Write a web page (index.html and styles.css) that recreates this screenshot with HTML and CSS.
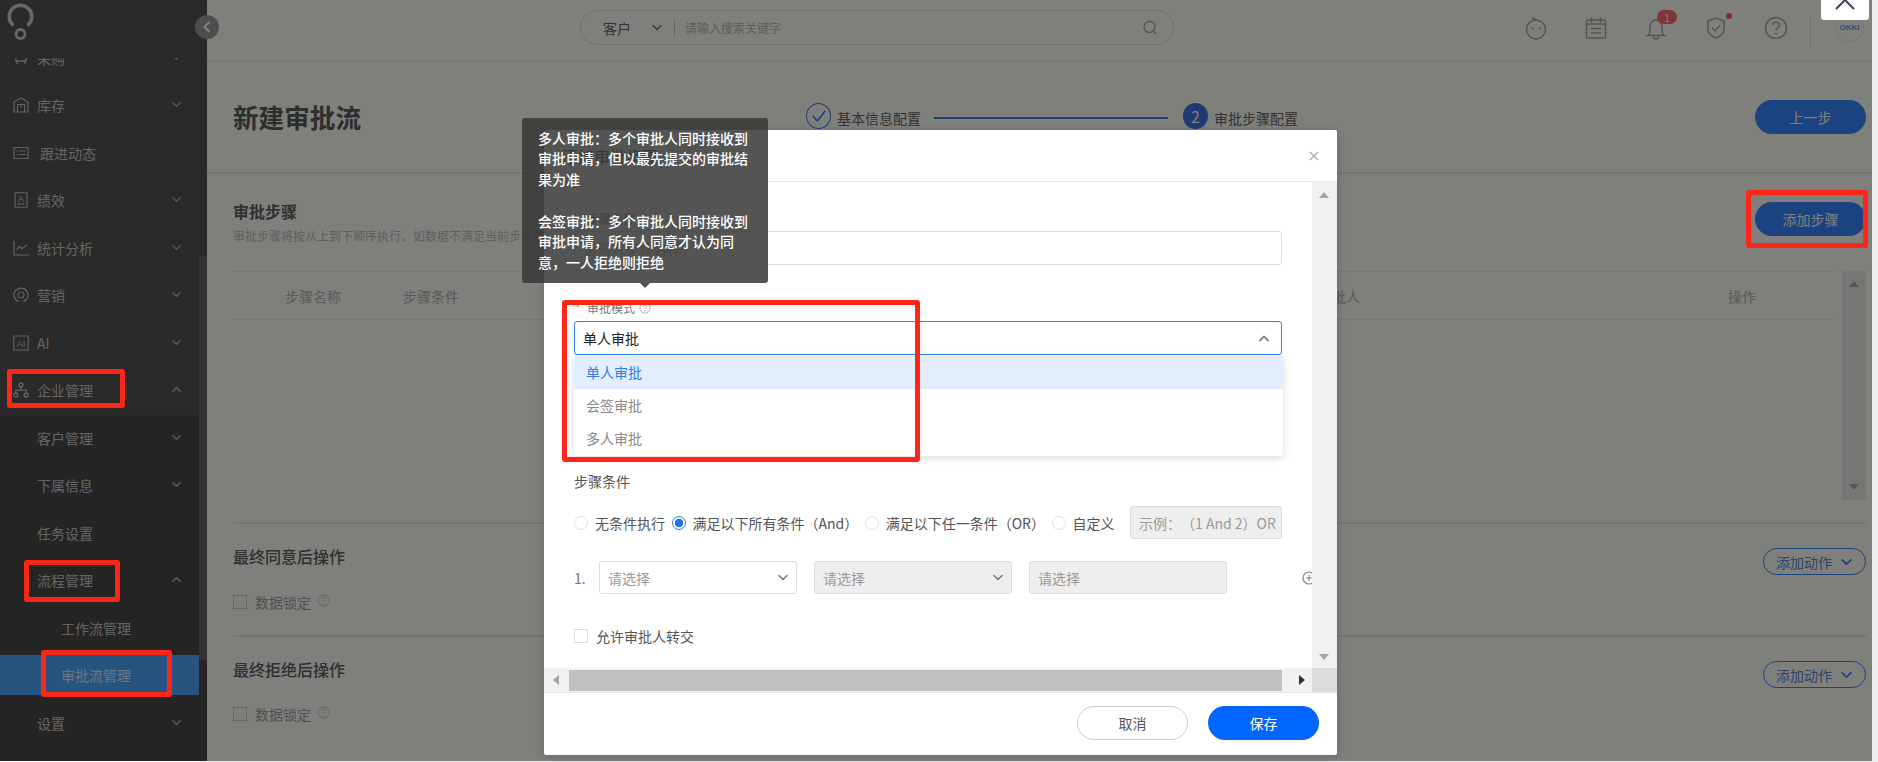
FILE: index.html
```html
<!DOCTYPE html>
<html lang="zh-CN">
<head>
<meta charset="utf-8">
<title>新建审批流</title>
<link rel="stylesheet" href="styles.css">
</head>
<body>
<svg class="sprite" width="0" height="0" aria-hidden="true">
  <symbol id="down" viewBox="0 0 10 6"><path d="M1 1l4 4 4-4" fill="none" stroke="currentColor" stroke-width="1.5" stroke-linecap="round" stroke-linejoin="round"/></symbol>
  <symbol id="up" viewBox="0 0 10 6"><path d="M1 5l4-4 4 4" fill="none" stroke="currentColor" stroke-width="1.8" stroke-linecap="round" stroke-linejoin="round"/></symbol>
  <symbol id="help" viewBox="0 0 14 14"><circle cx="7" cy="7" r="6" fill="none" stroke="currentColor"/><path d="M5.2 5.4c0-2.300 3.600-2.300 3.600 0 0 1.400-1.800 1.300-1.800 2.900" fill="none" stroke="currentColor"/><circle cx="7" cy="10.300" r=".7" fill="currentColor"/></symbol>
</svg>
<div class="app">
  <aside class="sidebar">
    <div class="logo">
      <svg width="32" height="42" viewBox="0 0 32 42"><path d="M7.500 24.500A11.300 11.300 0 1 1 23.500 24.500" fill="none" stroke="#cfcfcf" stroke-width="3.600" stroke-linecap="round"/><circle cx="15.500" cy="34" r="4.500" fill="none" stroke="#cfcfcf" stroke-width="2.800"/></svg>
    </div>
    <nav class="nav">
      <div class="nav-item"><svg class="nav-icon" viewBox="0 0 16 16"><path d="M2 2l1 9h10l1-9M4 11v3M12 11v3M5 6h6" fill="none" stroke="currentColor" stroke-width="1.300"/></svg><span class="nav-text">采购</span><svg class="chev"><use href="#down"/></svg></div>
      <div class="nav-item"><svg class="nav-icon" viewBox="0 0 16 16"><path d="M1 5l7-4 7 4v10H1zM4.500 15V7.500h7V15M8 7.500V11" fill="none" stroke="currentColor" stroke-width="1.100"/></svg><span class="nav-text">库存</span><svg class="chev"><use href="#down"/></svg></div>
      <div class="nav-item"><svg class="nav-icon" viewBox="0 0 16 16"><path d="M1 2.500h14v11H1zM6 6h6.500M6 9.500h6.500M3.300 6h1M3.300 9.500h1" fill="none" stroke="currentColor" stroke-width="1.100"/></svg><span class="nav-text nav-text-wide">跟进动态</span></div>
      <div class="nav-item"><svg class="nav-icon" viewBox="0 0 16 16"><path d="M2 .8h12v14.400H2zM4.500 12h7" fill="none" stroke="currentColor" stroke-width="1.100"/><text x="8" y="9.600" class="icon-letter">A</text></svg><span class="nav-text">绩效</span><svg class="chev"><use href="#down"/></svg></div>
      <div class="nav-item"><svg class="nav-icon" viewBox="0 0 16 16"><path d="M1 1v14h15M3.500 10l3-3.500 2.500 2L14 5" fill="none" stroke="currentColor" stroke-width="1.100"/></svg><span class="nav-text">统计分析</span><svg class="chev"><use href="#down"/></svg></div>
      <div class="nav-item"><svg class="nav-icon" viewBox="0 0 16 16"><path d="M5.500 14.600A7 7 0 1 1 10.500 14.600" fill="none" stroke="currentColor" stroke-width="1.200"/><circle cx="8" cy="8" r="3" fill="none" stroke="currentColor" stroke-width="1.200"/></svg><span class="nav-text">营销</span><svg class="chev"><use href="#down"/></svg></div>
      <div class="nav-item"><svg class="nav-icon" viewBox="0 0 16 16"><path d="M.8 1h14.400v14H.8z" fill="none" stroke="currentColor" stroke-width="1.100"/><text x="8" y="11.500" class="icon-letter">AI</text></svg><span class="nav-text">AI</span><svg class="chev"><use href="#down"/></svg></div>
      <div class="nav-item nav-open"><svg class="nav-icon" viewBox="0 0 16 16"><circle cx="8" cy="3" r="2" fill="none" stroke="currentColor" stroke-width="1.300"/><circle cx="2.800" cy="13" r="2" fill="none" stroke="currentColor" stroke-width="1.300"/><circle cx="13.200" cy="13" r="2" fill="none" stroke="currentColor" stroke-width="1.300"/><path d="M8 5v3.200M2.800 11V8.200h10.400V11" fill="none" stroke="currentColor" stroke-width="1.300"/></svg><span class="nav-text">企业管理</span><svg class="chev"><use href="#up"/></svg></div>
      <div class="nav-item nav-sub"><span class="nav-text">客户管理</span><svg class="chev"><use href="#down"/></svg></div>
      <div class="nav-item nav-sub"><span class="nav-text">下属信息</span><svg class="chev"><use href="#down"/></svg></div>
      <div class="nav-item nav-sub"><span class="nav-text">任务设置</span></div>
      <div class="nav-item nav-sub"><span class="nav-text">流程管理</span><svg class="chev"><use href="#up"/></svg></div>
      <div class="nav-item nav-leaf"><span class="nav-text">工作流管理</span></div>
      <div class="nav-item nav-leaf nav-active"><span class="nav-text">审批流管理</span></div>
      <div class="nav-item nav-sub"><span class="nav-text">设置</span><svg class="chev"><use href="#down"/></svg></div>
      <div class="nav-scroll"></div>
    </nav>
  </aside>

  <main class="main">
    <header class="topbar">
      <div class="search">
        <span class="search-type">客户</span>
        <svg class="search-chev"><use href="#down"/></svg>
        <span class="search-sep"></span>
        <span class="search-ph">请输入搜索关键字</span>
        <svg class="search-icon" viewBox="0 0 16 16"><circle cx="7.500" cy="7" r="5.500" fill="none" stroke="currentColor" stroke-width="1.300"/><path d="M11.500 11l2.500 3" fill="none" stroke="currentColor" stroke-width="1.300"/></svg>
      </div>
      <div class="top-icons">
        <svg class="top-icon" viewBox="0 0 24 24"><circle cx="12" cy="13.500" r="9.500" fill="none" stroke="currentColor" stroke-width="1.500"/><path d="M8 1.500l4 2.500" fill="none" stroke="currentColor" stroke-width="1.500"/><circle cx="9" cy="12.500" r="1" fill="currentColor"/><circle cx="16" cy="12.500" r="1" fill="currentColor"/></svg>
        <svg class="top-icon" viewBox="0 0 24 24"><rect x="2.500" y="4" width="19" height="18" rx="2" fill="none" stroke="currentColor" stroke-width="1.500"/><path d="M7.500 1.500v5M16.500 1.500v5M2.500 8h19M7 12.500h10M7 17h10" fill="none" stroke="currentColor" stroke-width="1.500"/></svg>
        <span class="bell">
          <svg class="top-icon" viewBox="0 0 24 24"><path d="M2 19.500h20M4.500 19.500c1.500-2 1.500-4 1.500-8C6 7 8.500 4 12 4s6 3 6 7.500c0 4 0 6 1.500 8M9.500 20c0 4 5 4 5 0" fill="none" stroke="currentColor" stroke-width="1.500"/></svg>
          <span class="badge">1</span>
        </span>
        <span class="bell">
          <svg class="top-icon" viewBox="0 0 24 24"><path d="M12 2l8 3v8c0 4-3 7-8 9-5-2-8-5-8-9V5z" fill="none" stroke="currentColor" stroke-width="1.500"/><path d="M8 11.500l3.200 3.200 5-5.500" fill="none" stroke="currentColor" stroke-width="1.500"/></svg>
          <span class="dot"></span>
        </span>
        <svg class="top-icon" viewBox="0 0 24 24"><circle cx="12" cy="12" r="10.500" fill="none" stroke="currentColor" stroke-width="1.500"/><path d="M8.800 9.300c0-4.200 6.600-4.200 6.600 0 0 2.600-3.300 2.300-3.300 5" fill="none" stroke="currentColor" stroke-width="1.500"/><circle cx="12" cy="17.500" r="1" fill="currentColor"/></svg>
      </div>
      <span class="top-sep"></span>
      <span class="avatar">OKKI</span>
    </header>

    <section class="page-head">
      <h1 class="page-title">新建审批流</h1>
      <div class="steps">
        <span class="step-circle"><svg width="16" height="14" viewBox="0 0 16 14"><path d="M2 7l4.500 5L14 2" fill="none" stroke="currentColor" stroke-width="1.700"/></svg></span>
        <span class="step-text">基本信息配置</span>
        <span class="step-line"></span>
        <span class="step-circle step-current">2</span>
        <span class="step-text">审批步骤配置</span>
      </div>
      <button class="btn-primary">上一步</button>
    </section>

    <section class="block block-steps">
      <div class="block-row">
        <div>
          <h2 class="block-title">审批步骤</h2>
          <p class="block-sub">审批步骤将按从上到下顺序执行。如数据不满足当前步骤条件，则跳过当前步骤进入下一步骤</p>
        </div>
        <button class="btn-primary btn-add">添加步骤</button>
      </div>
      <div class="table-area">
        <div class="table-head">
          <span>步骤名称</span><span>步骤条件</span><span>审批人</span><span>操作</span>
        </div>
        <div class="table-scroll">
          <span class="arrow-up"></span>
          <span class="arrow-down"></span>
        </div>
      </div>
    </section>

    <section class="block block-final">
      <div class="final-row">
        <h2 class="block-title">最终同意后操作</h2>
        <button class="btn-outline">添加动作<svg class="btn-chev"><use href="#down"/></svg></button>
      </div>
      <div class="check-row"><span class="check"></span><span>数据锁定</span><svg class="help"><use href="#help"/></svg></div>
    </section>

    <section class="block block-final block-last">
      <div class="final-row">
        <h2 class="block-title">最终拒绝后操作</h2>
        <button class="btn-outline">添加动作<svg class="btn-chev"><use href="#down"/></svg></button>
      </div>
      <div class="check-row"><span class="check"></span><span>数据锁定</span><svg class="help"><use href="#help"/></svg></div>
    </section>
  </main>
  <div class="edge"></div>

  <button class="collapse"><svg width="8" height="12" viewBox="0 0 8 12"><path d="M6.500 1L1.500 6l5 5" fill="none" stroke="currentColor" stroke-width="2"/></svg></button>
  <div class="mask"></div>

  <div class="modal">
    <div class="modal-head">
      <span class="modal-title">添加审批步骤</span>
      <svg class="modal-close" viewBox="0 0 10 10"><path d="M1 1l8 8M9 1l-8 8" fill="none" stroke="currentColor" stroke-width="1.200"/></svg>
    </div>
    <div class="modal-body">
      <div class="form">
        <label class="field-label field-name">步骤名称</label>
        <div class="input">请输入步骤名称</div>
        <label class="field-label field-mode"><span class="req">*</span>审批模式<svg class="help help-small"><use href="#help"/></svg></label>
        <div class="input input-focus"><span>单人审批</span><svg class="sel-chev"><use href="#up"/></svg></div>
        <div class="field-label field-cond">步骤条件</div>
        <div class="radios">
          <span class="radio"></span><span class="radio-text">无条件执行</span>
          <span class="radio radio-on"></span><span class="radio-text">满足以下所有条件（And）</span>
          <span class="radio"></span><span class="radio-text">满足以下任一条件（OR）</span>
          <span class="radio"></span><span class="radio-text">自定义</span>
          <span class="input input-off input-example">示例：（1 And 2）OR</span>
        </div>
        <div class="cond-row">
          <span class="cond-no">1.</span>
          <span class="input cond-field">请选择<svg class="cond-chev"><use href="#down"/></svg></span>
          <span class="input input-off cond-field">请选择<svg class="cond-chev"><use href="#down"/></svg></span>
          <span class="input input-off cond-field">请选择</span>
          <svg class="cond-add" viewBox="0 0 14 14"><circle cx="7" cy="7" r="6" fill="none" stroke="currentColor" stroke-width="1.200"/><path d="M4 7h6M7 4v6" fill="none" stroke="currentColor" stroke-width="1.200"/></svg>
        </div>
        <div class="transfer"><span class="check check-light"></span><span>允许审批人转交</span></div>
      </div>
      <div class="vscroll"><span class="v-up"></span><span class="v-down"></span></div>
    </div>
    <div class="hscroll">
      <span class="h-left"></span>
      <span class="h-thumb"></span>
      <span class="h-right"></span>
      <span class="h-corner"></span>
    </div>
    <div class="modal-foot">
      <button class="btn-cancel">取消</button>
      <button class="btn-save">保存</button>
    </div>
  </div>

  <div class="dropdown">
    <div class="opt opt-on">单人审批</div>
    <div class="opt">会签审批</div>
    <div class="opt">多人审批</div>
  </div>

  <div class="tooltip">
    <p>多人审批：多个审批人同时接收到审批申请，但以最先提交的审批结果为准</p>
    <p>会签审批：多个审批人同时接收到审批申请，所有人同意才认为同意，一人拒绝则拒绝</p>
  </div>

  <div class="mark mark-a"></div>
  <div class="mark mark-b"></div>
  <div class="mark mark-c"></div>
  <div class="mark mark-d"></div>
  <div class="mark mark-e"></div>

  <div class="window-close"><svg width="24" height="12" viewBox="0 0 24 12"><path d="M3 9l9-9 9 9" fill="none" stroke="#3c4656" stroke-width="2"/></svg></div>
</div>
</body>
</html>
```

FILE: styles.css
```css
* { box-sizing: border-box; }
html, body { margin: 0; height: 100%; overflow: hidden; }
body { background: #eeeeee; font-family: "Noto Sans CJK SC", "Noto Sans", sans-serif; font-size: 14px; color: #5e5e5e; }
h1, h2, p { margin: 0; }
button { font-family: inherit; cursor: pointer; }
.sprite { position: absolute; }

.app { position: relative; display: flex; width: 1878px; height: 761px; overflow: hidden; }

/* sidebar */
.sidebar { display: flex; flex-direction: column; flex: none; width: 207px; background: #545454; color: #cacaca; }
.logo { height: 58px; padding: 0 0 0 5px; flex: none; }
.nav { position: relative; flex: 1; overflow: hidden; display: flex; flex-direction: column; gap: 7.5px; background: linear-gradient(#545454 357px, #4b4b4b 357px); }
.nav-item { flex: none; display: flex; align-items: center; height: 40px; padding-left: 13px; position: relative; }
.nav-item:first-child { margin-top: -20.5px; }
.nav-icon { width: 16px; height: 16px; margin-right: 8px; flex: none; color: #c8c8c8; }
.icon-letter { font-size: 9px; text-anchor: middle; fill: currentColor; font-family: "Liberation Sans", sans-serif; }
.nav-text { white-space: nowrap; line-height: 20px; }
.nav-text-wide { margin-left: 3px; }
.chev { position: absolute; left: 172px; top: 16px; width: 9px; height: 7px; color: #b4b4b4; }
.nav-sub { padding-left: 37px; background: transparent; }
.nav-leaf { padding-left: 61px; }
.nav-active { width: 199px; background: #4ca8ff; color: #ddeeff; }
.nav-scroll { position: absolute; left: 199px; top: 198px; width: 8px; height: 404px; background: #686868; }

.collapse { position: absolute; left: 195px; top: 15px; width: 24px; height: 24px; padding: 0; border: 0; border-radius: 50%; background: #9a9a9a; color: #ffffff; display: flex; align-items: center; justify-content: center; z-index: 1; }

/* main */
.main { flex: none; width: 1665px; background: #fffef9; display: flex; flex-direction: column; }
.edge { flex: 1; background: #eeeeee; }
.topbar { height: 62px; flex: none; display: flex; align-items: flex-start; padding: 10px 0 0 373px; border-bottom: 2px solid #f0eeea; }
.search { width: 594px; height: 35px; border: 1px solid #dedcd8; border-radius: 18px; display: flex; align-items: center; padding: 0 15px 0 22px; flex: none; }
.search-type { color: #666666; line-height: 20px; }
.search-chev { width: 10px; height: 7px; margin-left: 21px; color: #777777; }
.search-sep { width: 1px; height: 20px; background: #cfcdc9; margin: 0 10px 0 12px; }
.search-ph { font-size: 12px; color: #bbbbbb; flex: 1; }
.search-icon { width: 16px; height: 16px; color: #a0a0a0; }
.top-icons { display: flex; gap: 36px; margin-left: 350px; color: #a8a8a8; padding-top: 6px; flex: none; }
.top-icon { width: 24px; height: 24px; display: block; }
.bell { position: relative; display: block; width: 24px; height: 24px; }
.badge { position: absolute; left: 13px; top: -6px; width: 20px; height: 14px; border-radius: 7px; background: #ff6a70; color: #ffffff; font-size: 11px; line-height: 14px; text-align: center; }
.dot { position: absolute; left: 22px; top: -3px; width: 6px; height: 6px; border-radius: 50%; background: #ff5a60; }
.top-sep { width: 1px; height: 30px; margin: 7px 0 0 22px; background: #dddbd7; flex: none; }
.avatar { width: 29px; height: 29px; margin: 3px 0 0 24px; border: 1px solid #eceae6; border-radius: 50%; color: #5a9fff; font: 700 8px/27px "Liberation Sans", sans-serif; text-align: center; flex: none; }

.page-head { height: 112px; flex: none; display: grid; grid-template-columns: 573px 492px 1fr; align-items: center; padding: 0 6px 0 26px; border-bottom: 2px solid #eceae6; }
.page-title { font-size: 25.6px; font-weight: 700; line-height: 36px; color: #5c5c5c; }
.steps { display: flex; align-items: center; margin-top: -2px; }
.step-circle { width: 25px; height: 26px; border-radius: 50%; border: 1.5px solid #3e7ef0; color: #3e7ef0; display: flex; align-items: center; justify-content: center; flex: none; }
.step-current { background: #3a78e8; border-color: #3a78e8; color: #ffffff; font-size: 16px; margin-left: 15px; }
.step-text { margin-left: 6px; color: #666666; line-height: 20px; margin-top: 4px; white-space: nowrap; }
.step-line { width: 234px; height: 1.500px; margin: 4px 0 0 13px; background: #3e7ef0; flex: none; }
.btn-primary { width: 111px; height: 34px; border: 0; border-radius: 17px; background: #3486ff; color: #ffffff; font-size: 14px; justify-self: end; }

.block { margin: 0 6px 0 26px; border-bottom: 2px solid #eceae6; flex: none; }
.block-steps { height: 350px; padding-top: 27px; }
.block-row { display: flex; justify-content: space-between; align-items: flex-start; height: 70px; }
.block-title { font-size: 16px; font-weight: 700; line-height: 20px; color: #606060; }
.block-sub { margin-top: 7px; font-size: 12px; line-height: 16px; color: #bebebe; white-space: nowrap; }
.btn-add { margin-top: 1px; }
.table-area { display: flex; justify-content: space-between; align-items: flex-start; }
.table-head { width: 1600px; height: 49px; display: grid; grid-template-columns: 118px 915px 410px 1fr; align-items: center; padding-left: 52px; border-top: 1px solid #f0eeea; border-bottom: 1px solid #f0eeea; color: #b4b4b4; }
.table-scroll { position: relative; width: 24px; height: 229px; background: #efedea; }
.arrow-up, .arrow-down { position: absolute; left: 7px; width: 0; height: 0; border-left: 5.500px solid transparent; border-right: 5.500px solid transparent; }
.arrow-up { top: 10px; border-bottom: 6px solid #b0b0b0; }
.arrow-down { bottom: 10px; border-top: 6px solid #b0b0b0; }

.block-final { height: 113px; padding-top: 24px; }
.block-last { border-bottom: 0; }
.final-row { display: flex; justify-content: space-between; align-items: flex-start; height: 27px; }
.final-row .block-title { font-weight: 500; margin-top: -2px; }
.btn-outline { width: 103px; height: 27px; padding: 0 0 0 12px; display: flex; align-items: center; background: transparent; border: 1px solid #3486ff; border-radius: 14px; color: #5a88d8; font-size: 14px; }
.btn-chev { width: 11px; height: 8px; margin-left: 9px; color: #3486ff; }
.check-row { display: flex; align-items: center; height: 20px; margin-top: 17px; color: #a0a0a0; }
.block-last .check-row { margin-top: 16px; }
.check { width: 14px; height: 14px; border: 1px solid #d4d2ce; margin-right: 8px; flex: none; background: transparent; }
.help { width: 13px; height: 13px; margin: -4px 0 0 6px; color: #c0c0c0; }

.mask { position: absolute; left: 0; top: 0; right: 6px; bottom: 0; background: rgba(0, 0, 0, .5); z-index: 2; }

/* modal */
.modal { position: absolute; left: 544px; top: 130px; width: 793px; height: 625px; display: flex; flex-direction: column; background: #ffffff; border-radius: 2px; z-index: 3; box-shadow: 0 2px 10px rgba(0, 0, 0, .2); }
.modal-head { height: 52px; flex: none; display: flex; align-items: center; justify-content: space-between; padding: 0 18px 0 18px; border-bottom: 1px solid #e6e6e6; }
.modal-title { font-size: 16px; color: #333333; }
.modal-close { width: 10px; height: 10px; color: #a8a8a8; }
.modal-body { height: 486px; flex: none; display: flex; }
.form { width: 768px; padding: 27px 0 0 30px; overflow: hidden; flex: none; }
.field-label { display: block; line-height: 20px; color: #777777; }
.field-name { font-size: 12px; margin-left: 13px; }
.field-mode { font-size: 12px; margin-top: 33px; margin-left: 13px; position: relative; display: flex; align-items: center; }
.req { position: absolute; left: -12px; top: 0; color: #f08a8a; }
.help-small { width: 12px; height: 12px; margin: 0 0 0 4px; color: #a8a8a8; }
.field-cond { margin-top: 116px; color: #555555; }
.input { display: flex; align-items: center; width: 708px; height: 34px; margin-top: 2px; padding: 0 8px; border: 1px solid #dcdcdc; border-radius: 3px; color: #aaaaaa; background: #ffffff; }
.input-focus { margin-top: 3px; border-color: #2f80e8; color: #222222; justify-content: space-between; padding-right: 12px; }
.sel-chev { width: 10px; height: 7px; color: #888888; }
.input-off { background: #eeeeee; color: #999999; }
.radios { display: flex; align-items: center; width: 708px; height: 33px; margin-top: 15px; white-space: nowrap; }
.radio { width: 14px; height: 14px; flex: none; border: 1px solid #dddddd; border-radius: 50%; }
.radio-on { border: 1px solid #2f80e8; background: radial-gradient(circle, #1f6ff0 0 4px, #ffffff 4.500px); }
.radio-text { margin: 0 6.500px 0 7px; color: #555555; }
.input-example { width: 152px; height: 33px; margin: 0 0 0 auto; flex: none; font-size: 14px; white-space: nowrap; overflow: hidden; padding: 0 8px; text-spacing-trim: space-all; }
.cond-row { display: flex; align-items: center; gap: 17px; height: 33px; margin-top: 22px; }
.cond-no { width: 9px; margin-right: -1px; color: #777777; }
.cond-field { width: 198px; height: 33px; margin: 0; flex: none; justify-content: space-between; color: #999999; }
.cond-chev { width: 10px; height: 7px; color: #777777; }
.cond-add { width: 14px; height: 14px; margin-left: 58px; color: #888888; flex: none; }
.transfer { display: flex; align-items: center; height: 20px; margin-top: 32px; color: #555555; }
.check-light { border-color: #dddddd; }
.vscroll { position: relative; flex: 1; background: #f1f1f1; }
.v-up, .v-down { position: absolute; left: 7px; width: 0; height: 0; border-left: 5.500px solid transparent; border-right: 5.500px solid transparent; }
.v-up { top: 10px; border-bottom: 6px solid #a6a6a6; }
.v-down { bottom: 8px; border-top: 6px solid #a6a6a6; }
.hscroll { height: 25px; flex: none; display: flex; align-items: center; background: #f1f1f1; border-bottom: 1px solid #e4e4e4; }
.h-left { width: 0; height: 0; margin: 0 10px 0 9px; border-top: 5.500px solid transparent; border-bottom: 5.500px solid transparent; border-right: 6px solid #a6a6a6; }
.h-thumb { width: 713px; height: 21px; background: #c0c0c0; }
.h-right { width: 0; height: 0; margin: 0 7px 0 17px; border-top: 5.500px solid transparent; border-bottom: 5.500px solid transparent; border-left: 6px solid #333333; }
.h-corner { flex: 1; height: 100%; background: #dcdcdc; }
.modal-foot { flex: 1; display: flex; justify-content: flex-end; align-items: flex-start; gap: 20px; padding: 13px 18px 0 0; }
.btn-cancel, .btn-save { width: 111px; height: 34px; border-radius: 17px; font-size: 14px; }
.btn-cancel { background: #ffffff; border: 1px solid #cccccc; color: #555555; }
.btn-save { background: #0066ff; border: 0; color: #ffffff; }

.dropdown { position: absolute; left: 574px; top: 356px; width: 709px; height: 100px; padding: 0; background: #ffffff; border-radius: 3px; box-shadow: 0 2px 8px rgba(0, 0, 0, .15); z-index: 4; }
.opt { height: 33px; line-height: 33px; padding-left: 12px; color: #8a8a8a; }
.opt-on { background: #e3edfd; color: #2f7bf0; }

.tooltip { position: absolute; left: 522px; top: 118px; width: 246px; height: 165px; padding: 9.500px 12px 0 16px; background: rgba(56, 56, 56, .86); border-radius: 3px; color: #ffffff; line-height: 20.800px; font-weight: 500; z-index: 5; }
.tooltip p + p { margin-top: 20.800px; }
.tooltip::after { content: ""; position: absolute; left: 118px; bottom: -5px; border-left: 5px solid transparent; border-right: 5px solid transparent; border-top: 5px solid rgba(60, 60, 60, .9); }

/* annotation rectangles */
.mark { position: absolute; border: 5px solid #ff2617; border-radius: 3px; z-index: 6; }
.mark-a { left: 562px; top: 300px; width: 358px; height: 162px; }
.mark-b { left: 1746px; top: 190px; width: 122px; height: 58px; }
.mark-c { left: 7px; top: 369px; width: 118px; height: 39px; }
.mark-d { left: 24px; top: 560px; width: 96px; height: 42px; }
.mark-e { left: 41px; top: 650px; width: 131px; height: 47px; }

.window-close { position: absolute; left: 1821px; top: 0; width: 48px; height: 20px; background: #ffffff; border-radius: 0 0 3px 3px; z-index: 7; display: flex; justify-content: center; overflow: hidden; }
```
